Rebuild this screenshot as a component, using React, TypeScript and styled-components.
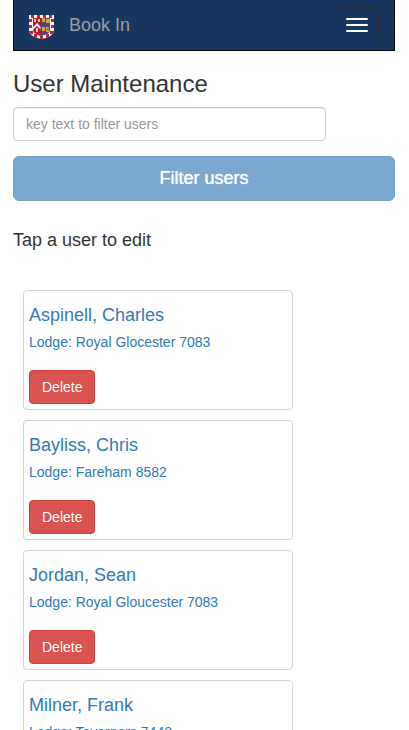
import React, { useState } from "react";
import styled, { createGlobalStyle } from "styled-components";

const GlobalStyle = createGlobalStyle`
  *, *::before, *::after { box-sizing: border-box; }
  body {
    margin: 0;
    background: #fff;
    color: #333;
    font: 14px/20px "Liberation Sans", Arial, sans-serif;
  }
`;

const Page = styled.div`
  padding: 0 14px 20px 13px;
`;

const Navbar = styled.nav`
  display: flex;
  align-items: center;
  justify-content: space-between;
  height: 51px;
  padding: 0 15px;
  background: #18375f;
  border: 1px solid #080808;
  border-top: 0;
`;

const Brand = styled.a`
  display: flex;
  align-items: center;
  gap: 14px;
  color: #9d9d9d;
  font-size: 18px;
  line-height: 20px;
  text-decoration: none;
`;

const Crest = styled.svg`
  display: block;
  width: 26px;
  height: 26px;
  margin-top: 3px;
`;

const MenuButton = styled.button`
  display: flex;
  flex-direction: column;
  gap: 4px;
  padding: 9px 10px;
  background: transparent;
  border: 1px solid #333;
  border-radius: 4px;
  cursor: pointer;
`;

const Bar = styled.span`
  width: 22px;
  height: 2px;
  border-radius: 1px;
  background: #fff;
`;

const Title = styled.h1`
  margin: 20px 0 10px;
  font-size: 24px;
  line-height: 26px;
  font-weight: 400;
`;

const FilterInput = styled.input`
  display: block;
  width: 82%;
  height: 34px;
  padding: 6px 12px;
  border: 1px solid #ccc;
  border-radius: 4px;
  box-shadow: inset 0 1px 1px rgba(0, 0, 0, 0.075);
  color: #555;
  font: inherit;
  &::placeholder { color: #999; opacity: 1; }
`;

const FilterButton = styled.button`
  display: block;
  width: 100%;
  margin-top: 15px;
  padding: 10px 16px;
  border: 1px solid #2e6da4;
  border-radius: 6px;
  background: #337ab7;
  color: #fff;
  font: 18px/23px "Liberation Sans", Arial, sans-serif;
  text-shadow: 0 0 1px #fff;
  opacity: 0.65;
`;

const Hint = styled.h2`
  margin: 29px 0 40px;
  font-size: 18px;
  line-height: 20px;
  font-weight: 400;
`;

const UserList = styled.ul`
  display: flex;
  flex-direction: column;
  gap: 10px;
  margin: 0;
  padding: 0 10px;
  list-style: none;
`;

const UserCard = styled.li`
  width: 100%;
  max-width: 270px;
  padding: 5px;
  border: 1px solid #d5d5d5;
  border-radius: 4px;
`;

const UserLink = styled.a`
  display: block;
  margin-bottom: 18px;
  color: #337ab7;
  text-decoration: none;
`;

const UserName = styled.h3`
  margin: 9px 0 7px;
  font-size: 18px;
  line-height: 20px;
  font-weight: 400;
`;

const Lodge = styled.p`
  margin: 0;
`;

const DeleteButton = styled.button`
  display: block;
  padding: 6px 12px;
  border: 1px solid #d43f3a;
  border-radius: 4px;
  background: #d9534f;
  color: #fff;
  font: inherit;
  cursor: pointer;
`;

const users = [
  { name: "Aspinell, Charles", lodge: "Royal Glocester 7083" },
  { name: "Bayliss, Chris", lodge: "Fareham 8582" },
  { name: "Jordan, Sean", lodge: "Royal Gloucester 7083" },
  { name: "Milner, Frank", lodge: "Taverners 7442" },
];

const shield = "M0 1H25V17C25 21 18 24 12.500 25C7 24 0 21 0 17Z";

function CrestIcon() {
  return (
    <Crest viewBox="0 0 26 26" aria-hidden="true">
      <clipPath id="shield"><path d={shield} /></clipPath>
      <g clipPath="url(#shield)">
        <path d="M0 0H26V26H0Z" fill="#f4eeee" />
        <path d="M2 1H5V4H2ZM8 1H11V4H8ZM14 1H17V4H14ZM20 1H23V4H20ZM0 5H3V8H0ZM0 11H3V14H0ZM0 17H4V20H0ZM22 5H25V8H22ZM22 11H25V14H22ZM21 17H25V20H21ZM5 20H8V24H5ZM17 20H20V24H17ZM11 22H14V25H11Z" fill="#c9202b" />
        <path d="M4 4H12V22C8 21 4 19 4 16Z" fill="#bd1720" />
        <path d="M12 4H21V16C21 19 17 21 12 22Z" fill="#4247a0" />
        <path d="M13 4H16V8H13ZM17 5H21V9H17ZM13 13H16V17H13ZM17 13H20V18H17Z" fill="#d3a626" />
        <path d="M4 13L8 9L12 13V16L8 12L4 16Z" fill="#f5eeee" />
        <path d="M5 5H7V8H5ZM9 5H11V8H9ZM7 14H9V18H7Z" fill="#dfc9c6" />
        <path d="M12 4V22M13 11H21M15 9V11M18 15H20M14 18H17" stroke="#6d3540" />
      </g>
    </Crest>
  );
}

export default function App() {
  const [filter, setFilter] = useState("");
  return (
    <>
      <GlobalStyle />
      <Page>
        <Navbar>
          <Brand href="#"><CrestIcon />Book In</Brand>
          <MenuButton type="button" aria-label="Toggle navigation">
            <Bar /><Bar /><Bar />
          </MenuButton>
        </Navbar>
        <main>
          <Title>User Maintenance</Title>
          <FilterInput
            type="text"
            aria-label="Filter text"
            placeholder="key text to filter users"
            value={filter}
            onChange={(e) => setFilter(e.target.value)}
          />
          <FilterButton type="button" disabled={!filter}>Filter users</FilterButton>
          <Hint>Tap a user to edit</Hint>
          <UserList>
            {users.map((user) => (
              <UserCard key={user.name}>
                <UserLink href="#">
                  <UserName>{user.name}</UserName>
                  <Lodge>Lodge: {user.lodge}</Lodge>
                </UserLink>
                <DeleteButton type="button">Delete</DeleteButton>
              </UserCard>
            ))}
          </UserList>
        </main>
      </Page>
    </>
  );
}
